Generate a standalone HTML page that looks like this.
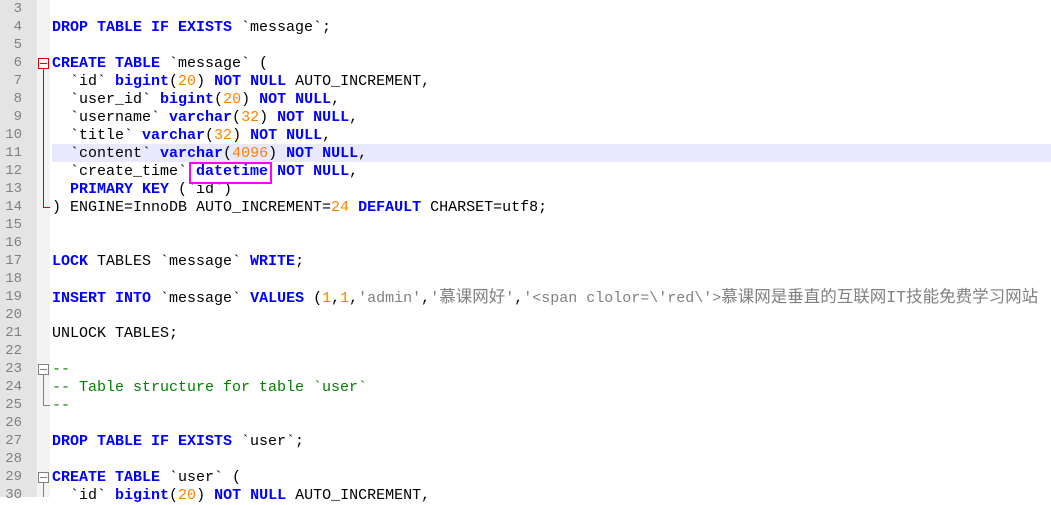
<!DOCTYPE html>
<html><head><meta charset="utf-8"><style>
body{margin:0;width:1051px;height:497px;overflow:hidden;background:#fff;position:relative;font-family:"Liberation Mono","Noto Sans CJK SC",monospace;font-size:15px}
#gut{position:absolute;left:0;top:0;width:37px;height:497px;background:#e4e4e4}
#fold{position:absolute;left:37px;top:0;width:13px;height:497px;background:#f3f3f3}
.ln{position:absolute;left:0;width:22px;text-align:right;color:#808080;font-size:14px;height:18px;line-height:18px;top:1px}
.l{position:absolute;left:52px;height:18px;line-height:18px;white-space:pre;color:#000;margin-top:1px}
.k{color:#0000ff;font-weight:bold}
.n{color:#ff8000}
.s{color:#808080}
.c{color:#008000}
.cj{font-size:16.5px}
</style></head><body>
<div id="gut"></div><div id="fold"></div>
<div style="position:absolute;left:52px;top:144px;width:999px;height:18px;background:#e8e8ff"></div>
<div class="ln" style="top:0">3</div><div class="ln" style="top:18px">4</div><div class="ln" style="top:36px">5</div><div class="ln" style="top:54px">6</div><div class="ln" style="top:72px">7</div><div class="ln" style="top:90px">8</div><div class="ln" style="top:108px">9</div><div class="ln" style="top:126px">10</div><div class="ln" style="top:144px">11</div><div class="ln" style="top:162px">12</div><div class="ln" style="top:180px">13</div><div class="ln" style="top:198px">14</div><div class="ln" style="top:216px">15</div><div class="ln" style="top:234px">16</div><div class="ln" style="top:252px">17</div><div class="ln" style="top:270px">18</div><div class="ln" style="top:288px">19</div><div class="ln" style="top:306px">20</div><div class="ln" style="top:324px">21</div><div class="ln" style="top:342px">22</div><div class="ln" style="top:360px">23</div><div class="ln" style="top:378px">24</div><div class="ln" style="top:396px">25</div><div class="ln" style="top:414px">26</div><div class="ln" style="top:432px">27</div><div class="ln" style="top:450px">28</div><div class="ln" style="top:468px">29</div><div class="ln" style="top:486px">30</div>
<div style="position:absolute;left:38px;top:58px;width:9px;height:9px;border:1px solid #e00000;background:#fff"></div>
<div style="position:absolute;left:40px;top:63px;width:7px;height:1px;background:#e00000"></div>
<div style="position:absolute;left:43px;top:68px;width:1px;height:140px;background:#e00000"></div>
<div style="position:absolute;left:43px;top:207px;width:7px;height:1px;background:#e00000"></div>
<div style="position:absolute;left:38px;top:364px;width:9px;height:9px;border:1px solid #808080;background:#fff"></div>
<div style="position:absolute;left:40px;top:369px;width:7px;height:1px;background:#808080"></div>
<div style="position:absolute;left:43px;top:374px;width:1px;height:32px;background:#808080"></div>
<div style="position:absolute;left:43px;top:405px;width:7px;height:1px;background:#808080"></div>
<div style="position:absolute;left:38px;top:472px;width:9px;height:9px;border:1px solid #808080;background:#fff"></div>
<div style="position:absolute;left:40px;top:477px;width:7px;height:1px;background:#808080"></div>
<div style="position:absolute;left:43px;top:482px;width:1px;height:15px;background:#808080"></div>

<div class="l" style="top:18px"><span class="k">DROP TABLE IF EXISTS</span> `message`;</div>
<div class="l" style="top:54px"><span class="k">CREATE TABLE</span> `message` (</div>
<div class="l" style="top:72px">  `id` <span class="k">bigint</span>(<span class="n">20</span>) <span class="k">NOT NULL</span> AUTO_INCREMENT,</div>
<div class="l" style="top:90px">  `user_id` <span class="k">bigint</span>(<span class="n">20</span>) <span class="k">NOT NULL</span>,</div>
<div class="l" style="top:108px">  `username` <span class="k">varchar</span>(<span class="n">32</span>) <span class="k">NOT NULL</span>,</div>
<div class="l" style="top:126px">  `title` <span class="k">varchar</span>(<span class="n">32</span>) <span class="k">NOT NULL</span>,</div>
<div class="l" style="top:144px">  `content` <span class="k">varchar</span>(<span class="n">4096</span>) <span class="k">NOT NULL</span>,</div>
<div class="l" style="top:162px">  `create_time` <span class="k">datetime</span> <span class="k">NOT NULL</span>,</div>
<div class="l" style="top:180px">  <span class="k">PRIMARY KEY</span> (`id`)</div>
<div class="l" style="top:198px">) ENGINE=InnoDB AUTO_INCREMENT=<span class="n">24</span> <span class="k">DEFAULT</span> CHARSET=utf8;</div>
<div class="l" style="top:252px"><span class="k">LOCK</span> TABLES `message` <span class="k">WRITE</span>;</div>
<div class="l" style="top:288px"><span class="k">INSERT INTO</span> `message` <span class="k">VALUES</span> (<span class="n">1</span>,<span class="n">1</span>,<span class="s">'admin'</span>,<span class="s">'<span class="cj">慕课网好</span>'</span>,<span class="s">'&lt;span clolor=\'red\'&gt;<span class="cj">慕课网是垂直的互联网IT技能免费学习网站</span></span></div>
<div class="l" style="top:324px">UNLOCK TABLES;</div>
<div class="l c" style="top:360px">--</div>
<div class="l c" style="top:378px">-- Table structure for table `user`</div>
<div class="l c" style="top:396px">--</div>
<div class="l" style="top:432px"><span class="k">DROP TABLE IF EXISTS</span> `user`;</div>
<div class="l" style="top:468px"><span class="k">CREATE TABLE</span> `user` (</div>
<div class="l" style="top:486px">  `id` <span class="k">bigint</span>(<span class="n">20</span>) <span class="k">NOT NULL</span> AUTO_INCREMENT,</div>
<div style="position:absolute;left:189px;top:162px;width:79px;height:18px;border:2px solid #ff00ff"></div>
</body></html>
